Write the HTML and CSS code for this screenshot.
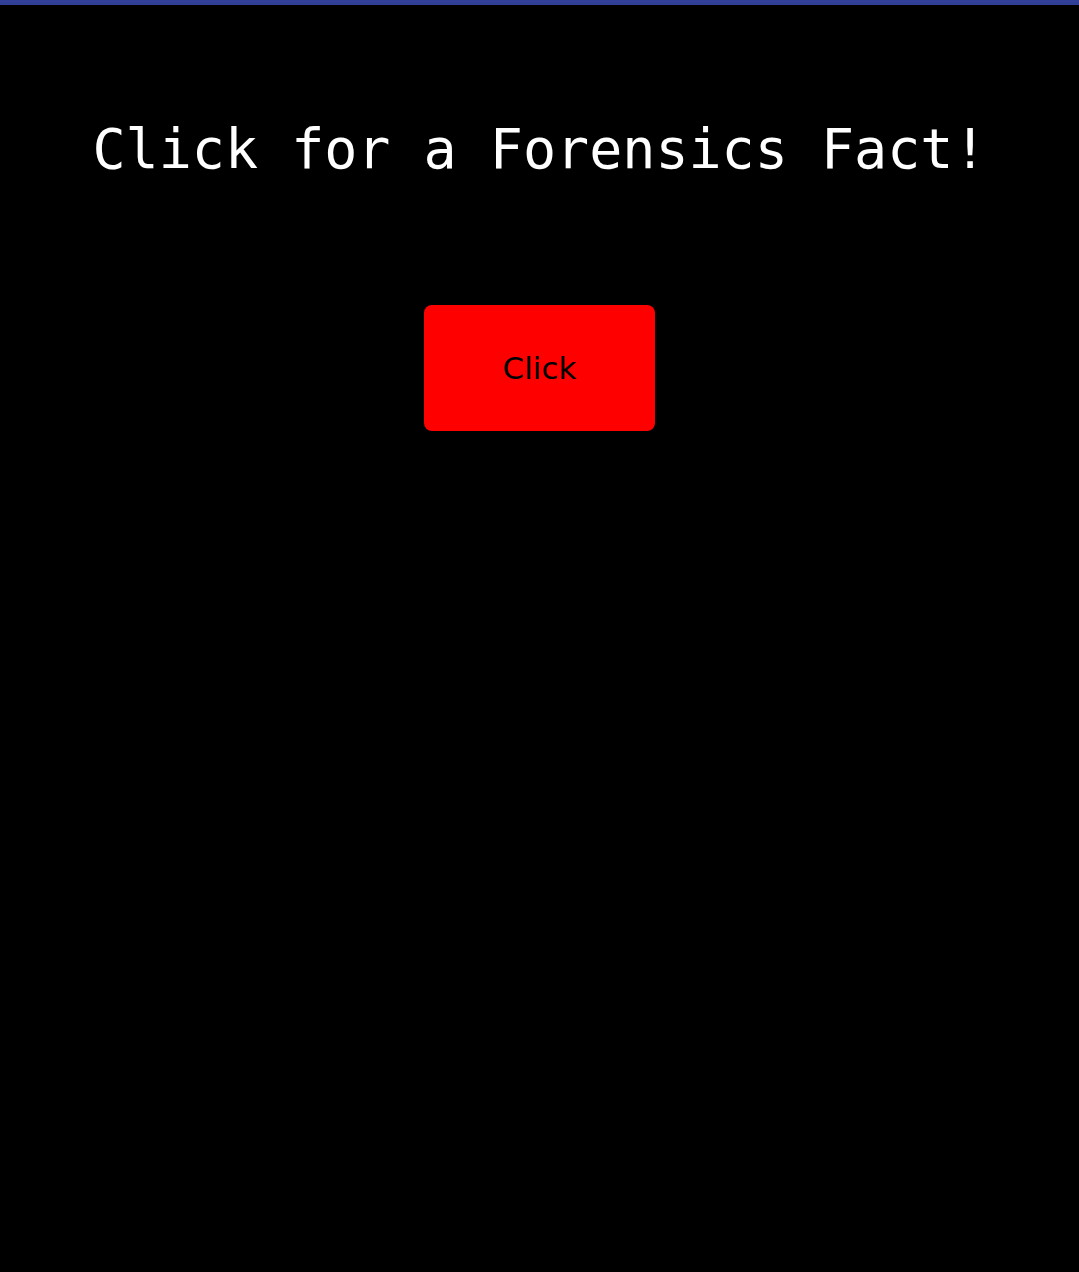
FILE: index.html
```html
<!DOCTYPE html>
<html>
<head>
<meta charset="utf-8">
<link rel="stylesheet" href="styles.css">
</head>
<body>
<div class="topbar"></div>
<main class="page">
  <h1 class="title">Click for a Forensics Fact!</h1>
  <button class="click-btn">Click</button>
</main>
</body>
</html>
```
FILE: styles.css
```css
html, body {
  margin: 0;
  padding: 0;
  background: #000;
  height: 100%;
}
.topbar {
  height: 5px;
  background: #323f97;
}
.page {
  display: flex;
  flex-direction: column;
  align-items: center;
}
.title {
  margin: 106px 0 0 0;
  font-family: "DejaVu Sans Mono", monospace;
  font-weight: normal;
  font-size: 55px;
  line-height: 76px;
  color: #fff;
  white-space: nowrap;
}
.click-btn {
  margin-top: 118px;
  width: 231px;
  height: 126px;
  background: #ff0000;
  border: none;
  border-radius: 8px;
  font-family: "Comic Sans MS", "DejaVu Sans", cursive;
  font-size: 31px;
  color: #000;
  padding: 0;
}
```
